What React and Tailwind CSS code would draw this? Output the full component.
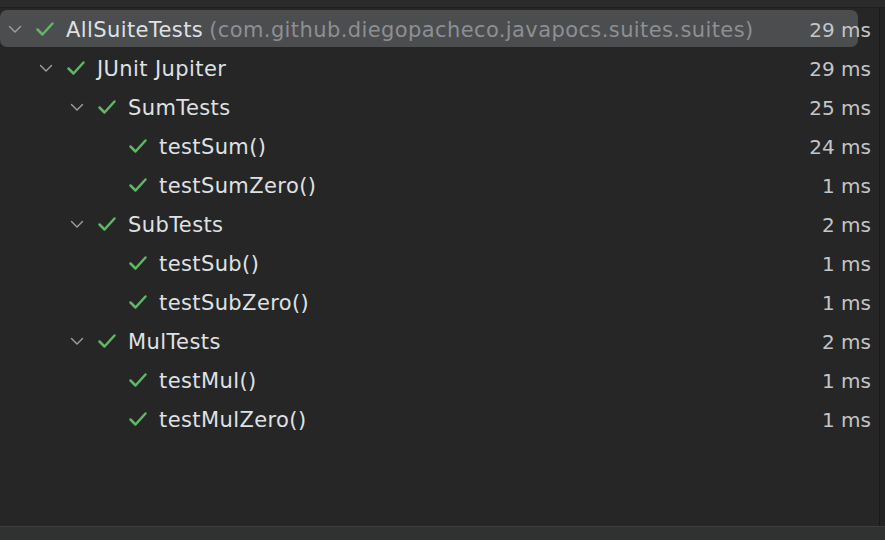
import React from "react";

const rows = [
  { level: 0, name: "AllSuiteTests", pkg: "(com.github.diegopacheco.javapocs.suites.suites)", time: "29 ms", open: true, selected: true },
  { level: 1, name: "JUnit Jupiter", time: "29 ms", open: true },
  { level: 2, name: "SumTests", time: "25 ms", open: true },
  { level: 3, name: "testSum()", time: "24 ms" },
  { level: 3, name: "testSumZero()", time: "1 ms" },
  { level: 2, name: "SubTests", time: "2 ms", open: true },
  { level: 3, name: "testSub()", time: "1 ms" },
  { level: 3, name: "testSubZero()", time: "1 ms" },
  { level: 2, name: "MulTests", time: "2 ms", open: true },
  { level: 3, name: "testMul()", time: "1 ms" },
  { level: 3, name: "testMulZero()", time: "1 ms" },
];

const pads = ["pl-[8px]", "pl-[39px]", "pl-[70px]", "pl-[101px]"];

function Chevron() {
  return (
    <svg width="14" height="14" viewBox="0 0 14 14" className="shrink-0">
      <path d="M1.5 4.5 L7 10 L12.5 4.5" fill="none" stroke="#9da0a8" strokeWidth="1.4" strokeLinecap="round" strokeLinejoin="round" />
    </svg>
  );
}

function Check() {
  return (
    <svg width="20" height="20" viewBox="0 0 20 20" className="shrink-0">
      <path d="M2.5 10.5 L7.5 15.5 L17.5 4.5" fill="none" stroke="#5fb865" strokeWidth="2.5" strokeLinecap="round" strokeLinejoin="round" />
    </svg>
  );
}

export default function App() {
  return (
    <div className="w-[885px] h-[540px] bg-[#262626] overflow-hidden flex flex-col text-[21px] tracking-[0.4px] font-['DejaVu_Sans','Noto_Sans',sans-serif]">
      <div className="h-[8px] bg-[#2b2b2b] border-b border-[#1f1f1f] shrink-0"></div>
      <div className="flex flex-1 min-h-0">
        <div className="flex-1 pt-[1px]">
          {rows.map((r, i) => (
            <div key={i} className="h-[39px] py-px pr-[8px]">
              <div
                className={
                  "h-[37px] flex items-center rounded-[7px] " +
                  pads[r.level] +
                  (r.selected ? " bg-[#4b4d4f] mr-[13px]" : "")
                }
              >
                <div className="w-[27px] flex items-center">
                  {r.open ? <Chevron /> : null}
                </div>
                <Check />
                <span className="ml-[11px] pt-[4px] text-[#dfe1e5] whitespace-nowrap leading-none">{r.name}</span>
                {r.pkg ? (
                  <span className="ml-[6px] pt-[4px] text-[#8d8f93] whitespace-nowrap leading-none">{r.pkg}</span>
                ) : null}
                <span
                  className={
                    "ml-auto pt-[2px] text-[20px] tracking-normal text-[#c3c5ca] whitespace-nowrap leading-none" +
                    (r.selected ? " -mr-[13px]" : "")
                  }
                >
                  {r.time}
                </span>
              </div>
            </div>
          ))}
        </div>
        <div className="w-[6px] border-l border-[#1a1a1a] bg-[#232323] shrink-0"></div>
      </div>
      <div className="h-[14px] bg-[#303231] border-t border-[#3d3f3e] shrink-0"></div>
    </div>
  );
}
